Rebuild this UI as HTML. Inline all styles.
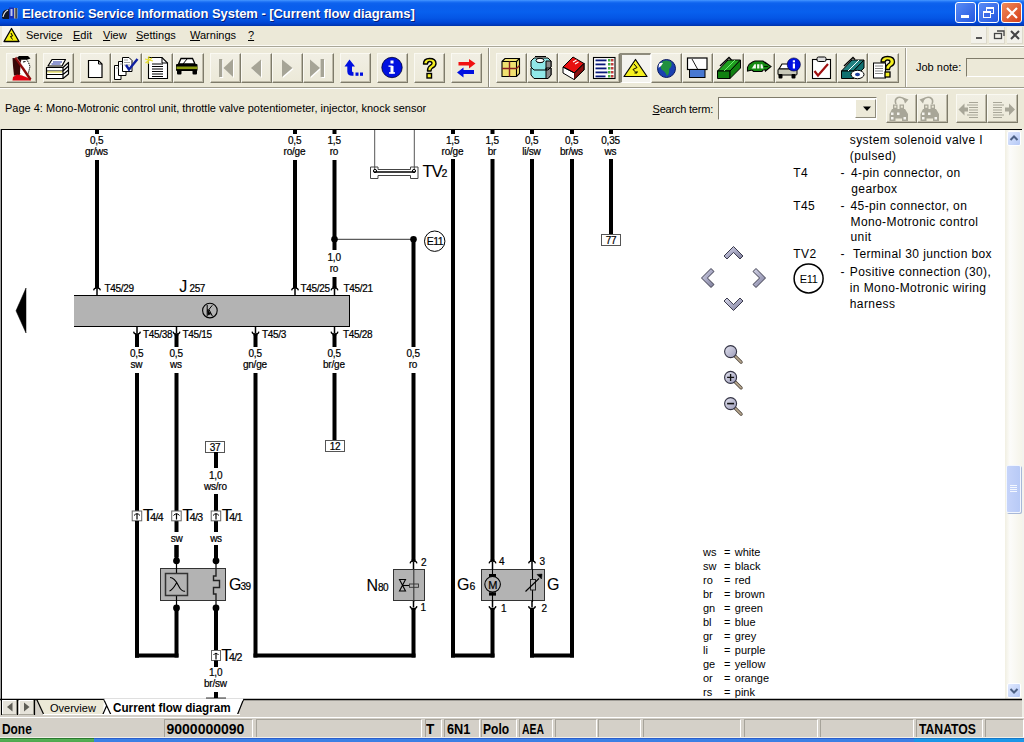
<!DOCTYPE html>
<html><head><meta charset="utf-8">
<style>
*{margin:0;padding:0;box-sizing:border-box}
html,body{width:1024px;height:742px;overflow:hidden;background:#ECE9D8;font-family:"Liberation Sans",sans-serif}
.a{position:absolute}
#title{left:0;top:0;width:1024px;height:26px;background:linear-gradient(to bottom,#4A9AFF 0px,#2B7FFA 1px,#0E63EE 3px,#0A5EEC 6px,#0860EE 12px,#0556E5 18px,#0049D9 22px,#003FC9 24px,#0033A8 26px)}
#title .t{left:22px;top:6px;color:#fff;font-weight:bold;font-size:13px;letter-spacing:-0.05px;text-shadow:1px 1px 0 #0A1E78}
.tb{width:21px;height:21px;top:2px;border:1px solid #fff;border-radius:3px}
#menu span.m{position:absolute;top:3px;font-size:11px;color:#000}
.btn{position:absolute;width:31px;height:30px;top:53px;background:linear-gradient(to bottom,#F1EFE4,#ECE9D8);border-style:solid;border-width:1px 1px 1px 1px;border-color:#FAF9F2 #7E7B6A #7E7B6A #FAF9F2;box-shadow:inset -1px -1px 0 #BDB9A8}
.btn.pr{border-color:#8E8B7C #FFFFFF #FFFFFF #8E8B7C;border-width:2px 1px 1px 2px;background:#F4F3EE;box-shadow:none}
.sb{position:absolute;top:719px;height:19px;border:1px solid;border-color:#A6A39A #fff #fff #A6A39A}
.st{position:absolute;top:722px;font-weight:bold;font-size:14px;line-height:14px;transform-origin:0 0;white-space:nowrap}
svg text{fill:#000}
#dg text{stroke:#000;stroke-width:0.22px}
</style></head><body>
<div id="title" class="a">
  <svg class="a" style="left:1px;top:5px" width="18" height="15"><path d="M1,13 Q0.5,7 4,5 L8,4 V14 H2 Z" fill="#101828"/><path d="M2,12 Q3,7 7,5" stroke="#E8E8E8" stroke-width="1.2" fill="none"/><rect x="8" y="2.5" width="5" height="11" fill="#1830B8"/><rect x="9.5" y="4" width="2" height="7" fill="#C0C8F0"/><rect x="13" y="3" width="3.5" height="10.5" fill="#B8B4A8"/><rect x="14.5" y="3" width="1.2" height="10.5" fill="#202020"/></svg>
  <div class="a t">Electronic Service Information System - [Current flow diagrams]</div>
  <div class="a tb" style="left:955px;background:linear-gradient(135deg,#5A8CF5,#2357E0)"><div class="a" style="left:5px;top:12px;width:8px;height:3px;background:#fff"></div></div>
  <div class="a tb" style="left:978px;background:linear-gradient(135deg,#5A8CF5,#2357E0)"><div class="a" style="left:7px;top:4px;width:8px;height:7px;border:1px solid #fff;border-top-width:2px"></div><div class="a" style="left:4px;top:8px;width:8px;height:7px;border:1px solid #fff;border-top-width:2px;background:#3A6AE8"></div></div>
  <div class="a tb" style="left:1001px;background:linear-gradient(135deg,#F08A5A,#D5401A)"><svg class="a" style="left:3px;top:3px" width="14" height="14"><path d="M2 2L12 12M12 2L2 12" stroke="#fff" stroke-width="2.2"/></svg></div>
</div>
<div id="menu" class="a" style="left:0;top:26px;width:1024px;height:19px">
  <div class="a" style="left:2px;top:0;width:18px;height:19px;background:#F6F5EF"></div>
  <svg class="a" style="left:3px;top:1px" width="18" height="16"><path d="M8.5,1.5 L16,14.5 H1 Z" fill="#F5F010" stroke="#000" stroke-width="1.3" stroke-linejoin="round"/><path d="M8,6 L9.5,9 L7.5,9.5 L9.5,12.5" stroke="#000" fill="none" stroke-width="1"/></svg>
  <span class="m" style="left:26px">Servi<u>c</u>e</span>
  <span class="m" style="left:73px"><u>E</u>dit</span>
  <span class="m" style="left:103px"><u>V</u>iew</span>
  <span class="m" style="left:136px"><u>S</u>ettings</span>
  <span class="m" style="left:190px"><u>W</u>arnings</span>
  <span class="m" style="left:248px"><u>?</u></span>
  <div class="a" style="left:971px;top:1px;width:16px;height:17px;background:#F2F1EA;border-right:1px solid #DCD9CC;border-bottom:1px solid #DCD9CC"></div>
  <div class="a" style="left:989px;top:1px;width:16px;height:17px;background:#F2F1EA;border-right:1px solid #DCD9CC;border-bottom:1px solid #DCD9CC"></div>
  <div class="a" style="left:1007px;top:1px;width:16px;height:17px;background:#F2F1EA;border-right:1px solid #DCD9CC;border-bottom:1px solid #DCD9CC"></div>
  <svg class="a" style="left:970px;top:1px" width="54" height="17">
    <path d="M6,11 H12" stroke="#555" stroke-width="2"/>
    <rect x="24.5" y="6.5" width="7" height="5" fill="none" stroke="#444" stroke-width="1.3"/><path d="M27,4 H34 V9" fill="none" stroke="#444" stroke-width="1.3"/>
    <path d="M41,4 L49,12 M49,4 L41,12" stroke="#444" stroke-width="2"/>
  </svg>
</div>
<div class="a" style="left:0;top:45px;width:1024px;height:1px;background:#FBFAF4"></div>
<div class="a" style="left:0;top:46px;width:1024px;height:1px;background:#A9A798"></div>
<div class="a" style="left:0;top:47px;width:1024px;height:1px;background:#F8F7F0"></div>
<div class="a" style="left:0;top:87px;width:1024px;height:1px;background:#9E9B8C"></div>
<div class="a" style="left:0;top:88px;width:1024px;height:1px;background:#fff"></div>
<div class="a" style="left:488px;top:48px;width:1px;height:39px;background:#8E8B7C"></div>
<div class="a" style="left:489px;top:48px;width:1px;height:39px;background:#fff"></div>
<div class="a" style="left:905px;top:48px;width:1px;height:39px;background:#A09D8E"></div>
<div class="a" style="left:906px;top:48px;width:1px;height:39px;background:#fff"></div>
<div class="btn" style="left:6px"></div>
<div class="btn" style="left:43px"></div>
<div class="btn" style="left:80px"></div>
<div class="btn" style="left:111px"></div>
<div class="btn" style="left:142px"></div>
<div class="btn" style="left:173px"></div>
<div class="btn" style="left:210px"></div>
<div class="btn" style="left:241px"></div>
<div class="btn" style="left:272px"></div>
<div class="btn" style="left:303px"></div>
<div class="btn" style="left:340px"></div>
<div class="btn" style="left:377px"></div>
<div class="btn" style="left:414px"></div>
<div class="btn" style="left:451px"></div>
<div class="btn" style="left:496px"></div>
<div class="btn" style="left:527px"></div>
<div class="btn" style="left:558px"></div>
<div class="btn" style="left:589px"></div>
<div class="btn pr" style="left:620px"></div>
<div class="btn" style="left:651px"></div>
<div class="btn" style="left:682px"></div>
<div class="btn" style="left:713px"></div>
<div class="btn" style="left:744px"></div>
<div class="btn" style="left:775px"></div>
<div class="btn" style="left:806px"></div>
<div class="btn" style="left:837px"></div>
<div class="btn" style="left:868px"></div>
<div class="btn" style="left:886px;top:94px;height:29px"></div>
<div class="btn" style="left:917px;top:94px;height:29px"></div>
<div class="btn" style="left:956px;top:94px;height:29px"></div>
<div class="btn" style="left:987px;top:94px;height:29px"></div>
<div class="a" style="left:916px;top:61px;font-size:11px">Job note:</div>
<div class="a" style="left:966px;top:58px;width:60px;height:19px;border:1px solid;border-color:#7F7B6A #fff #fff #7F7B6A;background:#ECE9D8"></div>
<div class="a" style="left:5px;top:102px;font-size:11px">Page 4: Mono-Motronic control unit, throttle valve potentiometer, injector, knock sensor</div>
<div class="a" style="left:652.5px;top:102.5px;font-size:11px;letter-spacing:-0.2px"><u>S</u>earch term:</div>
<div class="a" style="left:718px;top:97px;width:159px;height:23px;border:1px solid;border-color:#7F7B6A #fff #fff #7F7B6A;background:#fff"></div>
<div class="a" style="left:855px;top:99px;width:21px;height:19px;background:#ECE9D8;border:1px solid;border-color:#fff #8E8B7C #8E8B7C #fff"></div>
<svg class="a" style="left:0;top:0" width="1024" height="130"><g>
<path d="M12.5,58 L20.5,58.5 L22.5,62.5 L21.5,70 L19.5,75.5 L14,75.5 L13,66 Z" fill="#3A0808"/>
<path d="M21,60.5 L26.5,59.5 L28.5,62.5 L30,66.5 L29,70.5 L28,74.5 L23.5,76.5 L20,72.5 Z" fill="#fff"/>
<path d="M26.5,59.5 L28.5,62.5 L30,66.5 L29,70.5 L28,74.5" fill="none" stroke="#000" stroke-width="1" stroke-dasharray="1.2 0.8"/>
<path d="M23,62 L25.5,61.5 M24,71 L26,72.5" stroke="#000" stroke-width="1"/>
<path d="M16.5,58.2 L19,56 L28,56 L30.5,58.5 L27,59.8 L19,59.8 Z" fill="#000"/>
<path d="M12.5,80.5 L13,77 L17,74.5 L22,75.5 L27,77.5 L31,79.5 L31,80.5 Z" fill="#E00010"/>
<path d="M15.5,57.5 L30.5,79.5" stroke="#8A0A0A" stroke-width="2.4"/>
<path d="M16.5,57.5 L24,67.5" stroke="#fff" stroke-width="0.6" opacity="0.7"/>
</g>
<g stroke="#000" stroke-width="1.2" stroke-linejoin="round">
<path d="M52,59.5 L65.5,59.5 L62,66 L48,66 Z" fill="#fff"/>
<path d="M53,62 H62 M51.5,64 H60.5" stroke="#2030A0" stroke-width="1"/>
<path d="M46.5,67.5 H63 L68.5,62.5 V74 L63,78.5 H46.5 Z" fill="#fff"/>
<path d="M46.5,71 H63 L68.5,66 M46.5,74.5 H63 L68.5,70 M63,67.5 V78.5" fill="none"/>
<path d="M47.5,72 H62" stroke="#E8E070" stroke-width="1.5"/>
</g>
<path d="M88.5,60.5 H98.5 L102,64 V77.5 H88.5 Z" fill="#fff" stroke="#000" stroke-width="1.2"/><path d="M98.5,60.5 V64 H102" fill="none" stroke="#000" stroke-width="1"/>
<g stroke="#000" stroke-width="1">
<path d="M114.5,65.5 H121 V79.5 H114.5 Z" fill="#fff"/>
<path d="M118.5,61.5 H126 V75.5 H118.5 Z" fill="#fff"/>
<path d="M122.5,57.5 H129 L132,60.5 V71.5 H122.5 Z" fill="#fff"/>
<path d="M124,60 H128 M124,62.5 H130 M124,65 H130 M120,64 H123 M116,68 H119" stroke="#888" stroke-width="0.8"/>
<path d="M126,65 L129,69.5 L137.5,59" stroke="#1020A0" stroke-width="2.4" fill="none"/>
</g>
<g>
<path d="M148.5,57.5 H162 L167.5,63 V78.5 H148.5 Z" fill="#fff" stroke="#000" stroke-width="1.1"/>
<path d="M162,57.5 V63 H167.5" fill="none" stroke="#000"/>
<path d="M152,64 H163 M152,66.5 H163 M152,69 H163 M152,71.5 H163 M152,74 H163 M152,76.5 H163" stroke="#000" stroke-width="1.1"/>
<path d="M145,59 L153,61 M149,56 L148,64 M145.5,63 L152,58" stroke="#E8E030" stroke-width="1.2"/>
</g>
<g>
<path d="M178.5,64 L181,58.5 H192.5 L195,64 Z" fill="#fff" stroke="#000" stroke-width="1.3"/>
<path d="M187,59 L183,64" stroke="#000" stroke-width="1"/>
<rect x="176" y="64" width="21.5" height="7" rx="1" fill="#000"/>
<rect x="176.5" y="66.5" width="21" height="2.6" fill="#8A9A10"/>
<rect x="177" y="70" width="4.5" height="4.5" rx="1" fill="#000"/>
<rect x="192.5" y="70" width="4.5" height="4.5" rx="1" fill="#000"/>
</g>
<g fill="#FFFFFF" transform="translate(1,1)"><rect x="219" y="59" width="3.2" height="18"/><path d="M223.5,68 L233,59 V77 Z"/>
<path d="M251,68 L261,59.5 V77 Z"/>
<path d="M292.5,68 L282,59.5 V77 Z"/>
<path d="M320,68 L310,59.5 V77 Z"/><rect x="320.6" y="59" width="3.4" height="18"/></g>
<g fill="#A6A496"><rect x="219" y="59" width="3.2" height="18"/><path d="M223.5,68 L233,59 V77 Z"/>
<path d="M251,68 L261,59.5 V77 Z"/>
<path d="M292.5,68 L282,59.5 V77 Z"/>
<path d="M320,68 L310,59.5 V77 Z"/><rect x="320.6" y="59" width="3.4" height="18"/></g>
<g fill="#0010E0">
<path d="M344.5,66.5 L349.5,59.5 L355,66.5 H352 V71 Q352,72.3 353.5,72.3 V75.8 H352 Q347.5,75.8 347.3,71.5 V66.5 Z"/>
<rect x="355.5" y="72.5" width="3" height="3.3"/><rect x="360" y="72.5" width="3" height="3.3"/>
</g>
<circle cx="392" cy="67.5" r="10.2" fill="#0010E0" stroke="#000030" stroke-width="0.8"/><rect x="390.5" y="66" width="3" height="7.5" fill="#fff"/><rect x="389" y="72.2" width="6" height="1.5" fill="#fff"/><rect x="388.5" y="65.5" width="4" height="1.3" fill="#fff"/><rect x="390.5" y="60.5" width="3" height="3" fill="#fff"/>
<path d="M423.5,64 Q423.5,58.5 429.5,58.5 Q436,58.5 436,63.5 Q436,66.5 432.5,68 Q431,68.8 431,71 H427.5 Q427.5,67 430,65.5 Q432,64.5 432,63.3 Q432,61.5 429.7,61.5 Q427.5,61.5 427.5,64 Z" fill="#F5F020" stroke="#000" stroke-width="1.4" stroke-linejoin="round"/><rect x="427" y="73.5" width="4.5" height="4.5" fill="#F5F020" stroke="#000" stroke-width="1.4"/>
<path d="M458.5,62 H469 V59 L475.5,63.5 L469,68.5 V65.5 H458.5 Z" fill="#F01010"/><path d="M474,70 H463.5 V67.5 L457,72.5 L463.5,77.5 V74 H474 Z" fill="#0010E0"/>
<g stroke="#000" stroke-width="1.1">
<path d="M502,61.5 L505,58.5 H519.5 V73.5 L516.5,76.5 H502 Z" fill="#F0E070"/>
<path d="M502,61.5 H516.5 V76.5 M516.5,61.5 L519.5,58.5" fill="none"/>
<path d="M509.5,61.5 V76.5 M502,68.5 H516.5 M516.5,68.5 L519.5,65.5" stroke="#8A2020" stroke-width="1.4" fill="none"/>
</g>
<g stroke="#000" stroke-width="1">
<path d="M531,68 L534,66 H548 L551,68 V75 L548,78.5 H534 L531,75 Z" fill="#90E8E8"/>
<path d="M531,61 L534,58 H548 L551,61 V67 L548,70 H534 L531,67 Z" fill="#90E8E8"/>
<path d="M546,61 H551 V67 L548,70 H546 Z M546,68 H551 V75 L548,78.5 H546 Z" fill="#8A8A8A"/>
<ellipse cx="540" cy="60.5" rx="4" ry="2.2" fill="#fff"/>
<path d="M535,56.5 H546" stroke="#000"/>
</g>
<g stroke="#000" stroke-width="1">
<path d="M563,67 L573,57 L584,63.5 L574.5,73 Z" fill="#E81010"/>
<path d="M563,67 V73 L574,79.5 L584,70 V63.5 L574.5,73 Z" fill="#fff"/>
<path d="M563,67 L574.5,73 V79.5" fill="none"/>
<path d="M574.5,73 L584,63.5 V70 L574,79.5" fill="#8A1010" stroke="#000"/>
<path d="M573,62 L576.5,60 M575,64 L578.5,62" stroke="#fff" stroke-width="1.1"/>
</g>
<rect x="593.5" y="57.5" width="21.5" height="21" fill="#fff" stroke="#000" stroke-width="1.1"/>
<g fill="#0A1A7A"><rect x="595.5" y="59.5" width="11" height="1.8"/><rect x="595.5" y="63.5" width="10" height="1.8"/><rect x="595.5" y="67.5" width="11" height="1.8"/><rect x="595.5" y="71.5" width="12" height="1.8"/><rect x="595.5" y="75.5" width="10" height="1.8"/></g>
<g><rect x="608" y="59" width="2.5" height="2.5" fill="#40B040"/><rect x="611" y="59" width="2.5" height="2.5" fill="#C04040"/><rect x="608" y="63" width="2.5" height="2.5" fill="#40B040"/><rect x="611" y="63" width="2.5" height="2.5" fill="#C04040"/><rect x="608" y="67" width="2.5" height="2.5" fill="#40B040"/><rect x="611" y="67" width="2.5" height="2.5" fill="#C04040"/><rect x="608" y="71" width="2.5" height="2.5" fill="#40B040"/><rect x="611" y="71" width="2.5" height="2.5" fill="#C04040"/><rect x="608" y="75" width="2.5" height="2.5" fill="#40B040"/><rect x="611" y="75" width="2.5" height="2.5" fill="#C04040"/></g>
<path d="M635.5,59.5 L647,76.5 H624 Z" fill="#F5F020" stroke="#000" stroke-width="1.2" stroke-linejoin="round"/><path d="M634,64 L637,67.5 L633,69.5 L636.5,73 M634.5,73 H637 V71" fill="none" stroke="#000" stroke-width="1"/>
<circle cx="666.5" cy="68.5" r="9" fill="#1A40B0" stroke="#0A1A60" stroke-width="1"/><path d="M663,61 Q668,59.5 671,62 Q673,66 669,69 Q670,73 667,76 Q665,71 662,70 Q659,66 663,61 Z" fill="#209040"/><path d="M659,64 Q661,62 663,63 Q661,67 658.5,68 Z" fill="#fff"/>
<rect x="687.5" y="58" width="19.5" height="11.5" fill="#fff" stroke="#000" stroke-width="1.2"/><path d="M692,59 L697.5,69" stroke="#000" stroke-width="0.9"/><rect x="689.5" y="69.5" width="15.5" height="8" fill="#4878D0" stroke="#000" stroke-width="1"/>
<g stroke="#000" stroke-width="1">
<path d="M717.5,71 L728,60 H740.5 L730,71 Z" fill="#20A020"/>
<path d="M717.5,71 H730 V78.5 H717.5 Z" fill="#108010"/>
<path d="M730,71 L740.5,60 V68 L730,78.5 Z" fill="#108010"/>
<path d="M720,66 L729,57.5 L731.5,60" fill="none" stroke-width="1.4"/>
<path d="M724,71 L735,60" stroke="#70F070" stroke-width="1"/>
</g>
<path d="M747.5,71 V67.5 Q749,63.5 752.5,62 L755,61 H763 L765.5,63 V62.5 L771,66.5 L765.5,71 V70 H763 L762,71.5 H753.5 L752,70 Z" fill="#138A13" stroke="#000" stroke-width="1.1"/><path d="M751.5,69 L754.5,64.3 H762.3 L763.5,69 Z" fill="#F4FAF4"/><path d="M756.5,64 V69.5 M760,64 V69.5 M751.5,69.2 H764" stroke="#138A13" stroke-width="1.2"/><path d="M764,66.5 H768" stroke="#000" stroke-width="0.8"/>
<g>
<path d="M779,69 L782,64 H791 L793,69 Z" fill="#fff" stroke="#000" stroke-width="1.1"/>
<rect x="778" y="69" width="19" height="6" rx="1" fill="#C8C8B8" stroke="#000" stroke-width="1"/>
<rect x="778.5" y="74" width="4" height="4.5" rx="1" fill="#000"/><rect x="791.5" y="74" width="4" height="4.5" rx="1" fill="#000"/>
<circle cx="793.8" cy="64.5" r="6.6" fill="#0010E0" stroke="#000030" stroke-width="0.6"/>
<rect x="792.8" y="63.5" width="2.2" height="5" fill="#fff"/><rect x="792.8" y="60.3" width="2.2" height="2" fill="#fff"/>
</g>
<rect x="812.5" y="59.5" width="18" height="19" fill="#fff" stroke="#000" stroke-width="1.1"/><rect x="817" y="57" width="9" height="4.5" rx="1.5" fill="#ddd" stroke="#000" stroke-width="1"/><path d="M814.5,71 L818,75.5 L828,64" stroke="#A01010" stroke-width="2.2" fill="none"/>
<g stroke="#000" stroke-width="1">
<path d="M841.5,71 L852,60 H864 L853.5,71 Z" fill="#208080"/>
<path d="M841.5,71 H853.5 V78.5 H841.5 Z" fill="#107070"/>
<path d="M853.5,71 L864,60 V68 L853.5,78.5 Z" fill="#107070"/>
<path d="M844,66 L853,57.5 L855,59.5" fill="none" stroke-width="1.4"/>
<path d="M848,71 L859,60" stroke="#fff" stroke-width="1"/>
<ellipse cx="857.5" cy="74.5" rx="6.5" ry="4.2" fill="#fff"/>
<ellipse cx="857.5" cy="74.5" rx="2.5" ry="1.8" fill="#2040A0" stroke="none"/>
</g>
<rect x="873.5" y="63" width="12" height="15" fill="#fff" stroke="#000" stroke-width="1"/><path d="M875,66 H883 M875,68.5 H883 M875,71 H883 M875,73.5 H883" stroke="#777" stroke-width="0.9"/><path d="M881,62 Q881,56.5 887.5,56.5 Q894.5,56.5 894.5,62 Q894.5,65 891,66.5 Q889.5,67.3 889.5,69.5 H885.5 Q885.5,65.5 888,64 Q890,63 890,61.8 Q890,60 887.5,60 Q885.3,60 885.3,62 Z" fill="#F5F020" stroke="#000" stroke-width="1.3" stroke-linejoin="round"/><rect x="885" y="72" width="5" height="5" fill="#F5F020" stroke="#000" stroke-width="1.3"/>
<g fill="#A8A698"><rect x="893" y="104.5" width="4.5" height="4.5"/><rect x="899.5" y="104.5" width="4.5" height="4.5"/><path d="M889.5,121 V114 L892,109 H905 L908,114 V121 H902 V118.5 H895.5 V121 Z"/><rect x="894.3" y="105.7" width="2" height="2" fill="#ECE9D8"/><rect x="900.8" y="105.7" width="2" height="2" fill="#ECE9D8"/><rect x="891" y="112.5" width="2.5" height="2.5" fill="#F4F3EE"/><rect x="897" y="112.5" width="2.5" height="2.5" fill="#F4F3EE"/><rect x="891" y="117" width="2.5" height="2.5" fill="#F4F3EE"/><rect x="903.5" y="117" width="2.5" height="2.5" fill="#F4F3EE"/><path d="M896,104 Q894,99.5 898,97.5 Q902,96.5 904.5,99.5" fill="none" stroke="#A8A698" stroke-width="1.6"/><path d="M903,97.5 L908.5,99.5 L905,103.5 Z"/></g>
<g fill="#A8A698"><rect x="924" y="104.5" width="4.5" height="4.5"/><rect x="930.5" y="104.5" width="4.5" height="4.5"/><path d="M920.5,121 V114 L923,109 H936 L939,114 V121 H933 V118.5 H926.5 V121 Z"/><rect x="925.3" y="105.7" width="2" height="2" fill="#ECE9D8"/><rect x="931.8" y="105.7" width="2" height="2" fill="#ECE9D8"/><rect x="922" y="112.5" width="2.5" height="2.5" fill="#F4F3EE"/><rect x="928" y="112.5" width="2.5" height="2.5" fill="#F4F3EE"/><rect x="922" y="117" width="2.5" height="2.5" fill="#F4F3EE"/><rect x="934.5" y="117" width="2.5" height="2.5" fill="#F4F3EE"/><path d="M932,104 Q934,99.5 930,97.5 Q926,96.5 923.5,99.5" fill="none" stroke="#A8A698" stroke-width="1.6"/><path d="M925,97.5 L919.5,99.5 L923,103.5 Z"/></g>
<g fill="#A8A698"><path d="M958.5,109.5 L964.5,103.5 V115.5 Z"/><rect x="964" y="107.5" width="4" height="4"/><rect x="969" y="102" width="9" height="1"/><rect x="967" y="104.5" width="11" height="1"/><rect x="969" y="107" width="9" height="1"/><rect x="969" y="109.5" width="9" height="1"/><rect x="969" y="112" width="9" height="1"/><rect x="967" y="114.5" width="11" height="1"/><rect x="969" y="117" width="9" height="1"/></g>
<g fill="#A8A698"><path d="M1015,109.5 L1009,103.5 V115.5 Z"/><rect x="1005" y="107.5" width="4" height="4"/><rect x="993" y="102" width="9" height="1"/><rect x="993" y="104.5" width="11" height="1"/><rect x="993" y="107" width="9" height="1"/><rect x="993" y="109.5" width="9" height="1"/><rect x="993" y="112" width="9" height="1"/><rect x="993" y="114.5" width="11" height="1"/><rect x="993" y="117" width="9" height="1"/></g>

<path d="M863,106.5 H871 L867,111 Z" fill="#000"/>
</svg>
<div id="dia" class="a" style="left:0;top:128.8px;width:1022px;height:571px;background:#fff;border-top:1.5px solid #000"></div>
<div class="a" style="left:0;top:129px;width:1px;height:571px;background:#A0A0A0"></div>
<div class="a" style="left:1px;top:129px;width:1.2px;height:571px;background:#000"></div>
<div class="a" style="left:1022px;top:129px;width:2px;height:571px;background:#F4F3EE"></div>
<!-- scrollbar -->
<div class="a" style="left:1005px;top:130px;width:17px;height:569px;background:linear-gradient(to right,#F1EFE2,#FCFCFA 30%,#F5F4EA)"></div>
<div class="a" style="left:1007px;top:131px;width:14px;height:15px;border-radius:2px;background:linear-gradient(135deg,#E2EAFE,#B4C8F6);border:1px solid #fff"></div>
<svg class="a" style="left:1007px;top:131px" width="14" height="15"><path d="M3.5,9 L7,5.5 L10.5,9" stroke="#4D6185" stroke-width="2" fill="none"/></svg>
<div class="a" style="left:1007px;top:683px;width:14px;height:15px;border-radius:2px;background:linear-gradient(135deg,#E2EAFE,#B4C8F6);border:1px solid #fff"></div>
<svg class="a" style="left:1007px;top:683px" width="14" height="15"><path d="M3.5,6 L7,9.5 L10.5,6" stroke="#4D6185" stroke-width="2" fill="none"/></svg>
<div class="a" style="left:1006px;top:465px;width:15px;height:48px;border-radius:2px;background:linear-gradient(to right,#C6D4FA,#B8CAF6);border:1px solid #F2F6FE;box-shadow:1px 1px 0 #A8B8D8"></div>
<div class="a" style="left:1010px;top:485px;width:7px;height:8px;background:repeating-linear-gradient(to bottom,#F4F8FF 0 1px,transparent 1px 2px)"></div>
<svg class="a" style="left:0;top:0" width="1024" height="742" font-family="Liberation Sans, sans-serif">
<defs>
<clipPath id="dclip"><rect x="2" y="130" width="1003" height="569"/></clipPath>
<linearGradient id="chg" x1="0" y1="0" x2="1" y2="1"><stop offset="0" stop-color="#D8D8E8"/><stop offset="0.5" stop-color="#A9A9C4"/><stop offset="1" stop-color="#7D7D98"/></linearGradient>
<linearGradient id="mgg" x1="0" y1="0" x2="1" y2="1"><stop offset="0" stop-color="#E4E4F0"/><stop offset="1" stop-color="#9A9AB8"/></linearGradient>
</defs>
<g clip-path="url(#dclip)"><g id="dg">
<rect x="95.0" y="129" width="4" height="5" fill="#000" />
<text x="96.6" y="144.3" font-size="10" text-anchor="middle" letter-spacing="-0.2" >0,5</text>
<text x="96.4" y="155.1" font-size="10" text-anchor="middle" letter-spacing="-0.2" >gr/ws</text>
<rect x="293.0" y="129" width="4" height="5" fill="#000" />
<text x="294.6" y="144.3" font-size="10" text-anchor="middle" letter-spacing="-0.2" >0,5</text>
<text x="294.4" y="155.1" font-size="10" text-anchor="middle" letter-spacing="-0.2" >ro/ge</text>
<rect x="332.5" y="129" width="4" height="5" fill="#000" />
<text x="334.1" y="144.3" font-size="10" text-anchor="middle" letter-spacing="-0.2" >1,5</text>
<text x="333.9" y="155.1" font-size="10" text-anchor="middle" letter-spacing="-0.2" >ro</text>
<rect x="451.0" y="129" width="4" height="5" fill="#000" />
<text x="452.6" y="144.3" font-size="10" text-anchor="middle" letter-spacing="-0.2" >1,5</text>
<text x="452.4" y="155.1" font-size="10" text-anchor="middle" letter-spacing="-0.2" >ro/ge</text>
<rect x="490.5" y="129" width="4" height="5" fill="#000" />
<text x="492.1" y="144.3" font-size="10" text-anchor="middle" letter-spacing="-0.2" >1,5</text>
<text x="491.9" y="155.1" font-size="10" text-anchor="middle" letter-spacing="-0.2" >br</text>
<rect x="530.0" y="129" width="4" height="5" fill="#000" />
<text x="531.6" y="144.3" font-size="10" text-anchor="middle" letter-spacing="-0.2" >0,5</text>
<text x="531.4" y="155.1" font-size="10" text-anchor="middle" letter-spacing="-0.2" >li/sw</text>
<rect x="570.0" y="129" width="4" height="5" fill="#000" />
<text x="571.6" y="144.3" font-size="10" text-anchor="middle" letter-spacing="-0.2" >0,5</text>
<text x="571.4" y="155.1" font-size="10" text-anchor="middle" letter-spacing="-0.2" >br/ws</text>
<rect x="609.0" y="129" width="4" height="5" fill="#000" />
<text x="610.6" y="144.3" font-size="10" text-anchor="middle" letter-spacing="-0.2" >0,35</text>
<text x="610.4" y="155.1" font-size="10" text-anchor="middle" letter-spacing="-0.2" >ws</text>
<rect x="95.0" y="160" width="4" height="127.5" fill="#000" />
<rect x="95" y="286.5" width="4" height="2.2" fill="#000" />
<path d="M93.6,290.4 C94,286.9 100,286.9 100.4,290.4" stroke="#000" stroke-width="1.2" fill="none" />
<path d="M94.9,290.4 C95.1,288.4 98.9,288.4 99.1,290.4 Z" fill="#fff"/>
<line x1="97" y1="289.0" x2="97" y2="295" stroke="#000" stroke-width="1.5" />
<text x="104.5" y="291.5" font-size="10" text-anchor="start" letter-spacing="-0.3" >T45/29</text>
<rect x="293.0" y="160" width="4" height="127.5" fill="#000" />
<rect x="293" y="286.5" width="4" height="2.2" fill="#000" />
<path d="M291.6,290.4 C292,286.9 298,286.9 298.4,290.4" stroke="#000" stroke-width="1.2" fill="none" />
<path d="M292.9,290.4 C293.1,288.4 296.9,288.4 297.1,290.4 Z" fill="#fff"/>
<line x1="295" y1="289.0" x2="295" y2="295" stroke="#000" stroke-width="1.5" />
<text x="300.5" y="291.5" font-size="10" text-anchor="start" letter-spacing="-0.3" >T45/25</text>
<rect x="332.5" y="160" width="4" height="90" fill="#000" />
<text x="334.1" y="261.3" font-size="10" text-anchor="middle" letter-spacing="-0.2" >1,0</text>
<text x="333.9" y="272.1" font-size="10" text-anchor="middle" letter-spacing="-0.2" >ro</text>
<rect x="332.5" y="277" width="4" height="10.5" fill="#000" />
<rect x="332.5" y="286.5" width="4" height="2.2" fill="#000" />
<path d="M331.1,290.4 C331.5,286.9 337.5,286.9 337.9,290.4" stroke="#000" stroke-width="1.2" fill="none" />
<path d="M332.4,290.4 C332.6,288.4 336.4,288.4 336.6,290.4 Z" fill="#fff"/>
<line x1="334.5" y1="289.0" x2="334.5" y2="295" stroke="#000" stroke-width="1.5" />
<text x="343.5" y="291.5" font-size="10" text-anchor="start" letter-spacing="-0.3" >T45/21</text>
<line x1="334.5" y1="239.3" x2="413.5" y2="239.3" stroke="#333" stroke-width="1" />
<circle cx="334.5" cy="239.3" r="3.3" stroke="#000" stroke-width="0" fill="#000"/>
<circle cx="413.5" cy="239.3" r="3.3" stroke="#000" stroke-width="0" fill="#000"/>
<rect x="411.5" y="239" width="4" height="108" fill="#000" />
<circle cx="434.7" cy="241.2" r="10.2" stroke="#000" stroke-width="1" fill="none"/>
<text x="434.9" y="245.2" font-size="10.5" text-anchor="middle" letter-spacing="-0.6" >E11</text>
<line x1="374.7" y1="129" x2="374.7" y2="169" stroke="#555" stroke-width="1" />
<line x1="414.3" y1="129" x2="414.3" y2="169" stroke="#555" stroke-width="1" />
<path d="M370.5,178.5 V167 H378 V169.5 H410.5 V167 H418 V178.5 H410.5 V175.5 H378 V178.5 Z" stroke="#444" stroke-width="1" fill="none" />
<line x1="374" y1="172" x2="415" y2="172" stroke="#000" stroke-width="1.3" />
<circle cx="375" cy="171" r="1.6" stroke="#000" stroke-width="1" fill="none"/>
<circle cx="414" cy="171" r="1.6" stroke="#000" stroke-width="1" fill="none"/>
<text x="422.5" y="177.2" font-size="16.5" text-anchor="start" letter-spacing="-0.9" style="stroke-width:0.1px" >TV</text>
<text x="441.5" y="177.2" font-size="10.5" text-anchor="start" >2</text>
<rect x="74" y="295" width="276" height="31" fill="#B3B3B3" />
<line x1="74" y1="295.5" x2="350" y2="295.5" stroke="#000" stroke-width="1.1" />
<line x1="74" y1="326.5" x2="350" y2="326.5" stroke="#000" stroke-width="1.1" />
<line x1="349.5" y1="295" x2="349.5" y2="327" stroke="#000" stroke-width="1" />
<text x="179.3" y="291.5" font-size="16" text-anchor="start" letter-spacing="0" style="stroke-width:0.1px" >J</text>
<text x="189.5" y="291.5" font-size="10" text-anchor="start" letter-spacing="-0.4" >257</text>
<circle cx="209.9" cy="310.6" r="7.3" stroke="#000" stroke-width="1.1" fill="none"/>
<path d="M207.2,305 V316.3 M207.5,311.2 L212.3,305.3 M209,309.5 L212.5,316.3" stroke="#000" stroke-width="1" fill="none" />
<path d="M207.5,309.5 L210.8,314 L208,315 Z" stroke="#000" stroke-width="0.5" fill="#000" />
<rect x="135" y="333.3" width="4" height="2.2" fill="#000" />
<path d="M133.6,331.6 C134,335.1 140,335.1 140.4,331.6" stroke="#000" stroke-width="1.2" fill="none" />
<path d="M134.9,331.6 C135.1,333.6 138.9,333.6 139.1,331.6 Z" fill="#fff"/>
<line x1="137" y1="326" x2="137" y2="333.0" stroke="#000" stroke-width="1.5" />
<rect x="135.0" y="334.5" width="4" height="12.5" fill="#000" />
<text x="143" y="337.5" font-size="10" text-anchor="start" letter-spacing="-0.3" >T45/38</text>
<rect x="174.5" y="333.3" width="4" height="2.2" fill="#000" />
<path d="M173.1,331.6 C173.5,335.1 179.5,335.1 179.9,331.6" stroke="#000" stroke-width="1.2" fill="none" />
<path d="M174.4,331.6 C174.6,333.6 178.4,333.6 178.6,331.6 Z" fill="#fff"/>
<line x1="176.5" y1="326" x2="176.5" y2="333.0" stroke="#000" stroke-width="1.5" />
<rect x="174.5" y="334.5" width="4" height="12.5" fill="#000" />
<text x="182.5" y="337.5" font-size="10" text-anchor="start" letter-spacing="-0.3" >T45/15</text>
<rect x="253.5" y="333.3" width="4" height="2.2" fill="#000" />
<path d="M252.1,331.6 C252.5,335.1 258.5,335.1 258.9,331.6" stroke="#000" stroke-width="1.2" fill="none" />
<path d="M253.4,331.6 C253.6,333.6 257.4,333.6 257.6,331.6 Z" fill="#fff"/>
<line x1="255.5" y1="326" x2="255.5" y2="333.0" stroke="#000" stroke-width="1.5" />
<rect x="253.5" y="334.5" width="4" height="12.5" fill="#000" />
<text x="262" y="337.5" font-size="10" text-anchor="start" letter-spacing="-0.3" >T45/3</text>
<rect x="332.5" y="333.3" width="4" height="2.2" fill="#000" />
<path d="M331.1,331.6 C331.5,335.1 337.5,335.1 337.9,331.6" stroke="#000" stroke-width="1.2" fill="none" />
<path d="M332.4,331.6 C332.6,333.6 336.4,333.6 336.6,331.6 Z" fill="#fff"/>
<line x1="334.5" y1="326" x2="334.5" y2="333.0" stroke="#000" stroke-width="1.5" />
<rect x="332.5" y="334.5" width="4" height="12.5" fill="#000" />
<text x="343" y="337.5" font-size="10" text-anchor="start" letter-spacing="-0.3" >T45/28</text>
<rect x="411.5" y="347" width="4" height="0" fill="#000" />
<text x="136.6" y="357.3" font-size="10" text-anchor="middle" letter-spacing="-0.2" >0,5</text>
<text x="136.4" y="368.1" font-size="10" text-anchor="middle" letter-spacing="-0.2" >sw</text>
<text x="176.1" y="357.3" font-size="10" text-anchor="middle" letter-spacing="-0.2" >0,5</text>
<text x="175.9" y="368.1" font-size="10" text-anchor="middle" letter-spacing="-0.2" >ws</text>
<text x="255.1" y="357.3" font-size="10" text-anchor="middle" letter-spacing="-0.2" >0,5</text>
<text x="254.9" y="368.1" font-size="10" text-anchor="middle" letter-spacing="-0.2" >gn/ge</text>
<text x="334.1" y="357.3" font-size="10" text-anchor="middle" letter-spacing="-0.2" >0,5</text>
<text x="333.9" y="368.1" font-size="10" text-anchor="middle" letter-spacing="-0.2" >br/ge</text>
<text x="413.1" y="357.3" font-size="10" text-anchor="middle" letter-spacing="-0.2" >0,5</text>
<text x="412.9" y="368.1" font-size="10" text-anchor="middle" letter-spacing="-0.2" >ro</text>
<rect x="135.0" y="373" width="4" height="284.5" fill="#000" />
<rect x="174.5" y="373" width="4" height="138" fill="#000" />
<rect x="174.5" y="521" width="4" height="11" fill="#000" />
<rect x="174.5" y="545" width="4" height="12" fill="#000" />
<rect x="253.5" y="373" width="4" height="284.5" fill="#000" />
<rect x="332.5" y="373" width="4" height="67.5" fill="#000" />
<rect x="411.5" y="373" width="4" height="187.5" fill="#000" />
<rect x="325.5" y="440.5" width="19" height="11" fill="#fff" stroke="#555" stroke-width="1"/>
<text x="335" y="450" font-size="10" text-anchor="middle" letter-spacing="-0.3" >12</text>
<rect x="609.0" y="159" width="4" height="75.5" fill="#000" />
<rect x="601.5" y="234.5" width="19" height="11" fill="#fff" stroke="#555" stroke-width="1"/>
<text x="611" y="244" font-size="10" text-anchor="middle" letter-spacing="-0.3" >77</text>
<rect x="205.5" y="441.5" width="19" height="11" fill="#fff" stroke="#555" stroke-width="1"/>
<text x="215" y="451" font-size="10" text-anchor="middle" letter-spacing="-0.3" >37</text>
<rect x="214.0" y="452" width="4" height="16" fill="#000" />
<text x="215.6" y="478.8" font-size="10" text-anchor="middle" letter-spacing="-0.2" >1,0</text>
<text x="215.4" y="489.6" font-size="10" text-anchor="middle" letter-spacing="-0.2" >ws/ro</text>
<rect x="214.0" y="494" width="4" height="17" fill="#000" />
<rect x="214.0" y="521" width="4" height="11" fill="#000" />
<rect x="214.0" y="545" width="4" height="12" fill="#000" />
<text x="176.5" y="541.5" font-size="10" text-anchor="middle" letter-spacing="-0.3" >sw</text>
<text x="216" y="541.5" font-size="10" text-anchor="middle" letter-spacing="-0.3" >ws</text>
<rect x="132.2" y="511" width="9.5" height="9.8" fill="#fff" stroke="#666" stroke-width="1"/>
<path d="M134,515.5 Q137,512 140,515.5" stroke="#000" stroke-width="1" fill="none" />
<line x1="137" y1="513.5" x2="137" y2="519.5" stroke="#000" stroke-width="1.2" />
<text x="142.8" y="521" font-size="17" text-anchor="start" letter-spacing="-1" style="stroke-width:0.1px" >T</text>
<text x="150.3" y="521" font-size="10.5" text-anchor="start" letter-spacing="-0.6" >4/4</text>
<rect x="171.7" y="511" width="9.5" height="9.8" fill="#fff" stroke="#666" stroke-width="1"/>
<path d="M173.5,515.5 Q176.5,512 179.5,515.5" stroke="#000" stroke-width="1" fill="none" />
<line x1="176.5" y1="513.5" x2="176.5" y2="519.5" stroke="#000" stroke-width="1.2" />
<text x="182.3" y="521" font-size="17" text-anchor="start" letter-spacing="-1" style="stroke-width:0.1px" >T</text>
<text x="189.8" y="521" font-size="10.5" text-anchor="start" letter-spacing="-0.6" >4/3</text>
<rect x="211.2" y="511" width="9.5" height="9.8" fill="#fff" stroke="#666" stroke-width="1"/>
<path d="M213,515.5 Q216,512 219,515.5" stroke="#000" stroke-width="1" fill="none" />
<line x1="216" y1="513.5" x2="216" y2="519.5" stroke="#000" stroke-width="1.2" />
<text x="221.8" y="521" font-size="17" text-anchor="start" letter-spacing="-1" style="stroke-width:0.1px" >T</text>
<text x="229.3" y="521" font-size="10.5" text-anchor="start" letter-spacing="-0.6" >4/1</text>
<rect x="135.0" y="521" width="4" height="136.5" fill="#000" />
<rect x="174.5" y="545" width="4" height="15" fill="#000" />
<rect x="214.0" y="545" width="4" height="15" fill="#000" />
<rect x="160.5" y="568.5" width="65" height="32" fill="#B3B3B3" stroke="#333" stroke-width="1"/>
<line x1="176.5" y1="560" x2="176.5" y2="573.5" stroke="#000" stroke-width="1.2" />
<line x1="176.5" y1="595" x2="176.5" y2="608" stroke="#000" stroke-width="1.2" />
<rect x="165.5" y="573.5" width="22" height="22" fill="none" stroke="#333" stroke-width="1.5"/>
<path d="M170,577.5 C176,577.5 178,586 180.5,589 S184,591.5 185,591 M176.5,583 C174,587 172.5,590 169.5,591" stroke="#000" stroke-width="1.1" fill="none" />
<path d="M216,560 V576 H213.5 V580.5 H219.5 V587.5 H213.5 V594 H216 V608" stroke="#222" stroke-width="1.4" fill="none" />
<circle cx="176.5" cy="560.8" r="3.4" stroke="#000" stroke-width="0" fill="#000"/>
<circle cx="176.5" cy="608" r="3.4" stroke="#000" stroke-width="0" fill="#000"/>
<circle cx="216" cy="560.8" r="3.4" stroke="#000" stroke-width="0" fill="#000"/>
<circle cx="216" cy="608" r="3.4" stroke="#000" stroke-width="0" fill="#000"/>
<rect x="174.5" y="608" width="4" height="49.5" fill="#000" />
<rect x="214.0" y="608" width="4" height="42.5" fill="#000" />
<path d="M135,655.5 H178.5" stroke="#000" stroke-width="4" fill="none" />
<text x="229" y="590" font-size="16" text-anchor="start" letter-spacing="-0.5" style="stroke-width:0.1px" >G</text>
<text x="240.5" y="590" font-size="10" text-anchor="start" letter-spacing="-0.6" >39</text>
<rect x="211.5" y="650.5" width="9" height="10" fill="#fff" stroke="#666" stroke-width="1"/>
<path d="M213.5,655 Q216,651.5 218.5,655" stroke="#000" stroke-width="1" fill="none" />
<line x1="216" y1="653" x2="216" y2="659.5" stroke="#000" stroke-width="1.2" />
<text x="221.3" y="660.7" font-size="17" text-anchor="start" letter-spacing="-1" style="stroke-width:0.1px" >T</text>
<text x="229" y="660.7" font-size="10.5" text-anchor="start" letter-spacing="-0.6" >4/2</text>
<rect x="214.0" y="660.5" width="4" height="6.5" fill="#000" />
<text x="215.6" y="676.3" font-size="10" text-anchor="middle" letter-spacing="-0.2" >1,0</text>
<text x="215.4" y="687.1" font-size="10" text-anchor="middle" letter-spacing="-0.2" >br/sw</text>
<rect x="214.0" y="692" width="4" height="6" fill="#000" />
<rect x="206" y="697.6" width="20" height="1.6" fill="#000" />
<path d="M253.5,655.5 H415.5" stroke="#000" stroke-width="4" fill="none" />
<rect x="411.5" y="559.5" width="4" height="2.2" fill="#000" />
<path d="M410.1,563.4 C410.5,559.9 416.5,559.9 416.9,563.4" stroke="#000" stroke-width="1.2" fill="none" />
<path d="M411.4,563.4 C411.6,561.4 415.4,561.4 415.6,563.4 Z" fill="#fff"/>
<line x1="413.5" y1="562.0" x2="413.5" y2="569" stroke="#000" stroke-width="1.5" />
<rect x="393.5" y="569.5" width="31" height="31" fill="#B3B3B3" stroke="#333" stroke-width="1"/>
<line x1="413.8" y1="569" x2="413.8" y2="602" stroke="#333" stroke-width="1.1" />
<path d="M399.5,579.5 H405.5 L399.5,591 H405.5 Z" stroke="#000" stroke-width="1.1" fill="none" />
<line x1="402.5" y1="585.5" x2="409" y2="585.5" stroke="#000" stroke-width="1.1" />
<rect x="409.5" y="584" width="9" height="3.3" fill="none" stroke="#333" stroke-width="0.9"/>
<rect x="411.5" y="607.8" width="4" height="2.2" fill="#000" />
<path d="M410.1,606.1 C410.5,609.6 416.5,609.6 416.9,606.1" stroke="#000" stroke-width="1.2" fill="none" />
<path d="M411.4,606.1 C411.6,608.1 415.4,608.1 415.6,606.1 Z" fill="#fff"/>
<line x1="413.5" y1="601" x2="413.5" y2="607.5" stroke="#000" stroke-width="1.5" />
<rect x="411.5" y="609" width="4" height="48.5" fill="#000" />
<text x="421" y="566" font-size="10" text-anchor="start" >2</text>
<text x="420.5" y="611" font-size="10" text-anchor="start" >1</text>
<text x="366.5" y="590.5" font-size="16" text-anchor="start" style="stroke-width:0.1px" >N</text>
<text x="378" y="590.5" font-size="10" text-anchor="start" letter-spacing="-0.6" >80</text>
<rect x="451.0" y="159" width="4" height="498.5" fill="#000" />
<rect x="490.5" y="159" width="4" height="401.5" fill="#000" />
<rect x="530.0" y="159" width="4" height="401.5" fill="#000" />
<rect x="570.0" y="159" width="4" height="498.5" fill="#000" />
<rect x="490.5" y="559.5" width="4" height="2.2" fill="#000" />
<path d="M489.1,563.4 C489.5,559.9 495.5,559.9 495.9,563.4" stroke="#000" stroke-width="1.2" fill="none" />
<path d="M490.4,563.4 C490.6,561.4 494.4,561.4 494.6,563.4 Z" fill="#fff"/>
<line x1="492.5" y1="562.0" x2="492.5" y2="569" stroke="#000" stroke-width="1.5" />
<rect x="530" y="559.5" width="4" height="2.2" fill="#000" />
<path d="M528.6,563.4 C529,559.9 535,559.9 535.4,563.4" stroke="#000" stroke-width="1.2" fill="none" />
<path d="M529.9,563.4 C530.1,561.4 533.9,561.4 534.1,563.4 Z" fill="#fff"/>
<line x1="532" y1="562.0" x2="532" y2="569" stroke="#000" stroke-width="1.5" />
<rect x="481.5" y="569.5" width="63" height="31" fill="#B3B3B3" stroke="#333" stroke-width="1"/>
<line x1="492.5" y1="569" x2="492.5" y2="602" stroke="#000" stroke-width="1.1" />
<line x1="532.5" y1="569" x2="532.5" y2="602" stroke="#000" stroke-width="1.1" />
<rect x="489" y="574" width="7" height="3.3" fill="#000" />
<rect x="489" y="592.3" width="7" height="3.3" fill="#000" />
<circle cx="492.6" cy="584.3" r="7.8" stroke="#000" stroke-width="1.1" fill="#B3B3B3"/>
<text x="492.6" y="588.5" font-size="11" text-anchor="middle" letter-spacing="-0.5" >M</text>
<rect x="530.5" y="579.5" width="5" height="10.5" fill="#B3B3B3" stroke="#222" stroke-width="1"/>
<line x1="525.5" y1="591.5" x2="539" y2="578.5" stroke="#000" stroke-width="1.1" />
<path d="M537,574.5 L542,574 L541.5,579 Z" stroke="#000" stroke-width="0.5" fill="#000" />
<rect x="490.5" y="607.8" width="4" height="2.2" fill="#000" />
<path d="M489.1,606.1 C489.5,609.6 495.5,609.6 495.9,606.1" stroke="#000" stroke-width="1.2" fill="none" />
<path d="M490.4,606.1 C490.6,608.1 494.4,608.1 494.6,606.1 Z" fill="#fff"/>
<line x1="492.5" y1="601" x2="492.5" y2="607.5" stroke="#000" stroke-width="1.5" />
<rect x="530" y="607.8" width="4" height="2.2" fill="#000" />
<path d="M528.6,606.1 C529,609.6 535,609.6 535.4,606.1" stroke="#000" stroke-width="1.2" fill="none" />
<path d="M529.9,606.1 C530.1,608.1 533.9,608.1 534.1,606.1 Z" fill="#fff"/>
<line x1="532" y1="601" x2="532" y2="607.5" stroke="#000" stroke-width="1.5" />
<rect x="490.5" y="609" width="4" height="48.5" fill="#000" />
<rect x="530.0" y="609" width="4" height="48.5" fill="#000" />
<path d="M451,655.5 H494.5" stroke="#000" stroke-width="4" fill="none" />
<path d="M530,655.5 H574" stroke="#000" stroke-width="4" fill="none" />
<text x="499" y="565" font-size="10" text-anchor="start" >4</text>
<text x="539.5" y="565" font-size="10" text-anchor="start" >3</text>
<text x="501" y="611.5" font-size="10" text-anchor="start" >1</text>
<text x="541.5" y="611.5" font-size="10" text-anchor="start" >2</text>
<text x="457" y="590" font-size="16" text-anchor="start" style="stroke-width:0.1px" >G</text>
<text x="469.5" y="590" font-size="10.5" text-anchor="start" >6</text>
<text x="547" y="590" font-size="16" text-anchor="start" style="stroke-width:0.1px" >G</text>
<path d="M26,288 L16,310.8 L26,333 Z" stroke="#000" stroke-width="0.5" fill="#000" />

</g>
<text x="849.8" y="144" font-size="12" letter-spacing="0.4" text-anchor="start">system solenoid valve I</text>
<text x="849.8" y="160" font-size="12" letter-spacing="0.4" text-anchor="start">(pulsed)</text>
<text x="793.3" y="176.5" font-size="12" letter-spacing="0.4" text-anchor="start">T4</text>
<text x="840.6" y="176.5" font-size="12" letter-spacing="0.4" text-anchor="start">-</text>
<text x="851" y="176.5" font-size="12" letter-spacing="0.4" text-anchor="start">4-pin connector, on</text>
<text x="851.3" y="192.5" font-size="12" letter-spacing="0.4" text-anchor="start">gearbox</text>
<text x="793.3" y="209.5" font-size="12" letter-spacing="0.4" text-anchor="start">T45</text>
<text x="840.6" y="209.5" font-size="12" letter-spacing="0.4" text-anchor="start">-</text>
<text x="850.5" y="209.5" font-size="12" letter-spacing="0.4" text-anchor="start">45-pin connector, on</text>
<text x="850.5" y="225.7" font-size="12" letter-spacing="0.4" text-anchor="start">Mono-Motronic control</text>
<text x="850.5" y="241.2" font-size="12" letter-spacing="0.4" text-anchor="start">unit</text>
<text x="793.3" y="258" font-size="12" letter-spacing="0.4" text-anchor="start">TV2</text>
<text x="840.6" y="258" font-size="12" letter-spacing="0.4" text-anchor="start">-</text>
<text x="853" y="258" font-size="12" letter-spacing="0.4" text-anchor="start">Terminal 30 junction box</text>
<circle cx="808.6" cy="278.4" r="14.5" fill="none" stroke="#000" stroke-width="1.5"/>
<text x="808.6" y="282.5" font-size="11" letter-spacing="-0.3" text-anchor="middle">E11</text>
<text x="840.6" y="275.6" font-size="12" letter-spacing="0.4" text-anchor="start">-</text>
<text x="849.8" y="275.6" font-size="12" letter-spacing="0.4" text-anchor="start">Positive connection (30),</text>
<text x="849.8" y="291.7" font-size="12" letter-spacing="0.4" text-anchor="start">in Mono-Motronic wiring</text>
<text x="849.8" y="307.5" font-size="12" letter-spacing="0.4" text-anchor="start">harness</text>
<text x="703" y="556" font-size="11" letter-spacing="0" text-anchor="start">ws</text>
<text x="724" y="556" font-size="11" letter-spacing="0" text-anchor="start">=</text>
<text x="734.8" y="556" font-size="11" letter-spacing="0" text-anchor="start">white</text>
<text x="703" y="570" font-size="11" letter-spacing="0" text-anchor="start">sw</text>
<text x="724" y="570" font-size="11" letter-spacing="0" text-anchor="start">=</text>
<text x="734.8" y="570" font-size="11" letter-spacing="0" text-anchor="start">black</text>
<text x="703" y="584" font-size="11" letter-spacing="0" text-anchor="start">ro</text>
<text x="724" y="584" font-size="11" letter-spacing="0" text-anchor="start">=</text>
<text x="734.8" y="584" font-size="11" letter-spacing="0" text-anchor="start">red</text>
<text x="703" y="598" font-size="11" letter-spacing="0" text-anchor="start">br</text>
<text x="724" y="598" font-size="11" letter-spacing="0" text-anchor="start">=</text>
<text x="734.8" y="598" font-size="11" letter-spacing="0" text-anchor="start">brown</text>
<text x="703" y="612" font-size="11" letter-spacing="0" text-anchor="start">gn</text>
<text x="724" y="612" font-size="11" letter-spacing="0" text-anchor="start">=</text>
<text x="734.8" y="612" font-size="11" letter-spacing="0" text-anchor="start">green</text>
<text x="703" y="626" font-size="11" letter-spacing="0" text-anchor="start">bl</text>
<text x="724" y="626" font-size="11" letter-spacing="0" text-anchor="start">=</text>
<text x="734.8" y="626" font-size="11" letter-spacing="0" text-anchor="start">blue</text>
<text x="703" y="640" font-size="11" letter-spacing="0" text-anchor="start">gr</text>
<text x="724" y="640" font-size="11" letter-spacing="0" text-anchor="start">=</text>
<text x="734.8" y="640" font-size="11" letter-spacing="0" text-anchor="start">grey</text>
<text x="703" y="654" font-size="11" letter-spacing="0" text-anchor="start">li</text>
<text x="724" y="654" font-size="11" letter-spacing="0" text-anchor="start">=</text>
<text x="734.8" y="654" font-size="11" letter-spacing="0" text-anchor="start">purple</text>
<text x="703" y="668" font-size="11" letter-spacing="0" text-anchor="start">ge</text>
<text x="724" y="668" font-size="11" letter-spacing="0" text-anchor="start">=</text>
<text x="734.8" y="668" font-size="11" letter-spacing="0" text-anchor="start">yellow</text>
<text x="703" y="682" font-size="11" letter-spacing="0" text-anchor="start">or</text>
<text x="724" y="682" font-size="11" letter-spacing="0" text-anchor="start">=</text>
<text x="734.8" y="682" font-size="11" letter-spacing="0" text-anchor="start">orange</text>
<text x="703" y="696" font-size="11" letter-spacing="0" text-anchor="start">rs</text>
<text x="724" y="696" font-size="11" letter-spacing="0" text-anchor="start">=</text>
<text x="734.8" y="696" font-size="11" letter-spacing="0" text-anchor="start">pink</text>
<path d="M733.5,246.5 L743,256 L740,259 L733.5,252.4 L727,259 L724,256 Z" fill="url(#chg)" stroke="#3A3A4C" stroke-width="1" stroke-linejoin="miter"/>
<path d="M733.5,310.5 L743,301 L740,298 L733.5,304.6 L727,298 L724,301 Z" fill="url(#chg)" stroke="#3A3A4C" stroke-width="1" stroke-linejoin="miter"/>
<path d="M701.5,278 L711,268.5 L714,271.5 L707.4,278 L714,284.5 L711,287.5 Z" fill="url(#chg)" stroke="#3A3A4C" stroke-width="1" stroke-linejoin="miter"/>
<path d="M765.5,278 L756,268.5 L753,271.5 L759.6,278 L753,284.5 L756,287.5 Z" fill="url(#chg)" stroke="#3A3A4C" stroke-width="1" stroke-linejoin="miter"/>
<line x1="735.1" y1="356.1" x2="741.1" y2="362.1" stroke="#4A4036" stroke-width="3.2" stroke-linecap="round"/>
<line x1="735.1" y1="356.1" x2="741.1" y2="362.1" stroke="#B8A890" stroke-width="1.6" stroke-linecap="round"/>
<circle cx="730.6" cy="351.6" r="6" fill="url(#mgg)" stroke="#333344" stroke-width="1.1"/>
<line x1="735.1" y1="381.9" x2="741.1" y2="387.9" stroke="#4A4036" stroke-width="3.2" stroke-linecap="round"/>
<line x1="735.1" y1="381.9" x2="741.1" y2="387.9" stroke="#B8A890" stroke-width="1.6" stroke-linecap="round"/>
<circle cx="730.6" cy="377.4" r="6" fill="url(#mgg)" stroke="#333344" stroke-width="1.1"/>
<path d="M727.1,377.4 H734.1 M730.6,373.9 V380.9" stroke="#111" stroke-width="1.3"/>
<line x1="735.1" y1="408.1" x2="741.1" y2="414.1" stroke="#4A4036" stroke-width="3.2" stroke-linecap="round"/>
<line x1="735.1" y1="408.1" x2="741.1" y2="414.1" stroke="#B8A890" stroke-width="1.6" stroke-linecap="round"/>
<circle cx="730.6" cy="403.6" r="6" fill="url(#mgg)" stroke="#333344" stroke-width="1.1"/>
<path d="M727.1,403.6 H734.1" stroke="#111" stroke-width="1.6"/>

</g>
</svg>
<!-- Tabs -->
<div class="a" style="left:0;top:699px;width:1024px;height:18px;background:#D4D0C8"></div>
<svg class="a" style="left:0;top:698px" width="1024" height="20">
  <path d="M0,1.5 H1022" stroke="#000" stroke-width="1.3"/>
  <rect x="2" y="2" width="15" height="15" fill="#A8A59A"/><rect x="2" y="2" width="14" height="14" fill="#FFFFFF"/><rect x="3" y="3" width="13" height="13" fill="#E6E3DA"/>
  <rect x="19" y="2" width="15" height="15" fill="#A8A59A"/><rect x="19" y="2" width="14" height="14" fill="#FFFFFF"/><rect x="20" y="3" width="13" height="13" fill="#E6E3DA"/>
  <path d="M17.5,2 V17 M34.5,2 V17" stroke="#000" stroke-width="1.2"/>
  <path d="M1.5,2 V17" stroke="#000" stroke-width="1"/>
  <path d="M12.5,4.5 L7,9 L12.5,13.5 Z" fill="#5E5D56"/>
  <path d="M24,4.5 L29.5,9 L24,13.5 Z" fill="#5E5D56"/>
  <path d="M37,2 L43,16 H103 L108,2 Z" fill="#ECE9D8"/>
  <path d="M37,2 L43.5,16" stroke="#000" stroke-width="1.2" fill="none"/>
  <path d="M103,16 H237.5 L243.5,1.5 H103.8 Z" fill="#fff"/>
  <path d="M103.8,1.5 L110.8,16.5 M102.8,16.5 L106.5,8 M237.5,16.5 L243.5,1.5" stroke="#000" stroke-width="1.2" fill="none"/>
  <path d="M104.5,1.5 H243" stroke="#fff" stroke-width="2"/>
  <path d="M43,16.5 H240" stroke="#fff" stroke-width="1"/>
</svg>
<div class="a" style="left:50px;top:702px;font-size:11px">Overview</div>
<div class="a" style="left:112.5px;top:701px;font-size:12px;font-weight:bold;transform:scaleX(0.975);transform-origin:0 0">Current flow diagram</div>
<div class="a" style="left:1022px;top:699px;width:2px;height:18px;background:#EEEDE6"></div>
<div class="a" style="left:0;top:717px;width:1024px;height:1px;background:#fff"></div>
<div class="a" style="left:0;top:718px;width:1024px;height:20px;background:#D4D0C8"></div>
<div class="sb" style="left:164px;width:89px"></div>
<div class="sb" style="left:256px;width:166px"></div>
<div class="sb" style="left:425px;width:17px"></div>
<div class="sb" style="left:444px;width:36px"></div>
<div class="sb" style="left:481px;width:36px"></div>
<div class="sb" style="left:519px;width:34px"></div>
<div class="sb" style="left:555px;width:42px"></div>
<div class="sb" style="left:598px;width:43px"></div>
<div class="sb" style="left:643px;width:98px"></div>
<div class="sb" style="left:744px;width:74px"></div>
<div class="sb" style="left:820px;width:94px"></div>
<div class="sb" style="left:916px;width:67px"></div>
<div class="sb" style="left:985px;width:39px"></div>
<div class="st" style="left:2px;transform:scaleX(0.85)">Done</div>
<div class="st" style="left:166.5px;transform:scaleX(1.0)">9000000090</div>
<div class="st" style="left:426.3px;transform:scaleX(0.97)">T</div>
<div class="st" style="left:446.8px;transform:scaleX(0.91)">6N1</div>
<div class="st" style="left:483px;transform:scaleX(0.86)">Polo</div>
<div class="st" style="left:522px;transform:scaleX(0.74)">AEA</div>
<div class="st" style="left:918.5px;transform:scaleX(0.87)">TANATOS</div>
<div class="a" style="left:0;top:737px;width:1024px;height:1px;background:#F0EEE8"></div>
<div class="a" style="left:0;top:738px;width:1024px;height:4px;background:linear-gradient(to bottom,#2A5ECC 0,#2A5ECC 1px,#3C82E6 1px,#3A7EE4 4px)"></div>
<div class="a" style="left:0;top:738px;width:94px;height:4px;background:linear-gradient(to bottom,#2C7A30 0,#2C7A30 1px,#58B058 1px,#4CA84C 4px)"></div>
<div class="a" style="left:914px;top:738px;width:110px;height:4px;background:linear-gradient(to bottom,#1478C8 0,#1478C8 1px,#1C9AEA 1px,#1A94E6 4px)"></div>
</body></html>
